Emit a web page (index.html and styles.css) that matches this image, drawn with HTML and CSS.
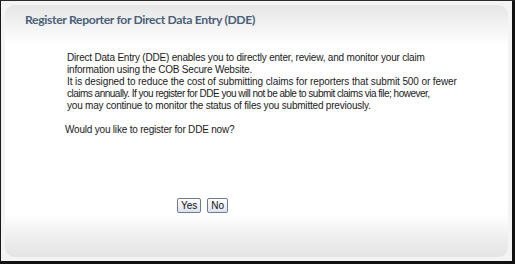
FILE: index.html
```html
<!DOCTYPE html>
<html>
<head>
<meta charset="utf-8">
<link rel="stylesheet" href="styles.css">
</head>
<body>
<div class="frame">
  <div class="panel">
    <div class="header">
      <h1 class="title">Register Reporter for Direct Data Entry (DDE)</h1>
    </div>
    <div class="content">
      <p class="intro"><span class="line l1">Direct Data Entry (DDE) enables you to directly enter, review, and monitor your claim</span><span class="line l2">information using the COB Secure Website.</span><span class="line l3">It is designed to reduce the cost of submitting claims for reporters that submit 500 or fewer</span><span class="line l4">claims annually. If you register for DDE you will not be able to submit claims via file; however,</span><span class="line l5">you may continue to monitor the status of files you submitted previously.</span></p>
      <p class="question">Would you like to register for DDE now?</p>
      <div class="buttons">
        <button class="btn">Yes</button>
        <button class="btn">No</button>
      </div>
    </div>
    <div class="footer"></div>
  </div>
</div>
</body>
</html>
```
FILE: styles.css
```css
html, body {
  margin: 0;
  padding: 0;
  background: #ffffff;
}
.frame {
  width: 515px;
  height: 264px;
  box-sizing: border-box;
  border-left: 1px solid #1a1a1a;
  border-top: 1px solid #2a2a2a;
  border-right: 3px solid #111111;
  border-bottom: 3px solid #111111;
  background: #f4f4f4;
  padding: 4px;
  display: flex;
}
.panel {
  flex: 1;
  display: flex;
  flex-direction: column;
  border-radius: 9px;
  background: #ffffff;
  overflow: hidden;
}
.header {
  height: 40px;
  background: linear-gradient(#e6e6e6 0%, #f1f1f1 45%, #ffffff 100%);
  padding: 0 0 0 20px;
  box-sizing: border-box;
}
.title {
  margin: 0;
  padding-top: 7px;
  font-family: Lato, "Open Sans", sans-serif;
  font-weight: 700;
  font-size: 12.2px;
  color: #4a5f78;
  letter-spacing: -0.35px;
}
.content {
  flex: 1;
  padding: 7px 0 0 62px;
  font-family: "Liberation Sans", Arial, sans-serif;
  font-size: 10px;
  color: #1a1a1a;
}
.intro {
  margin: 0;
  line-height: 12px;
  white-space: nowrap;
}
.line {
  display: block;
  letter-spacing: -0.2px;
}
.l3 {
  letter-spacing: -0.1px;
}
.l4 {
  letter-spacing: -0.5px;
}
.question {
  margin: 12px 0 0 -2px;
  line-height: 12px;
  letter-spacing: -0.2px;
}
.buttons {
  margin: 62px 0 0 110px;
  display: flex;
  gap: 6px;
}
.btn {
  font-family: "Liberation Sans", Arial, sans-serif;
  font-size: 10px;
  height: 15px;
  padding: 0 3px;
  border: 1px solid #6f7b92;
  border-radius: 2px;
  background: linear-gradient(#ffffff, #dde2ee);
  color: #111;
  line-height: 12px;
}
.footer {
  height: 42px;
  background: linear-gradient(#ffffff 0%, #efefef 50%, #e4e4e4 100%);
}
```
